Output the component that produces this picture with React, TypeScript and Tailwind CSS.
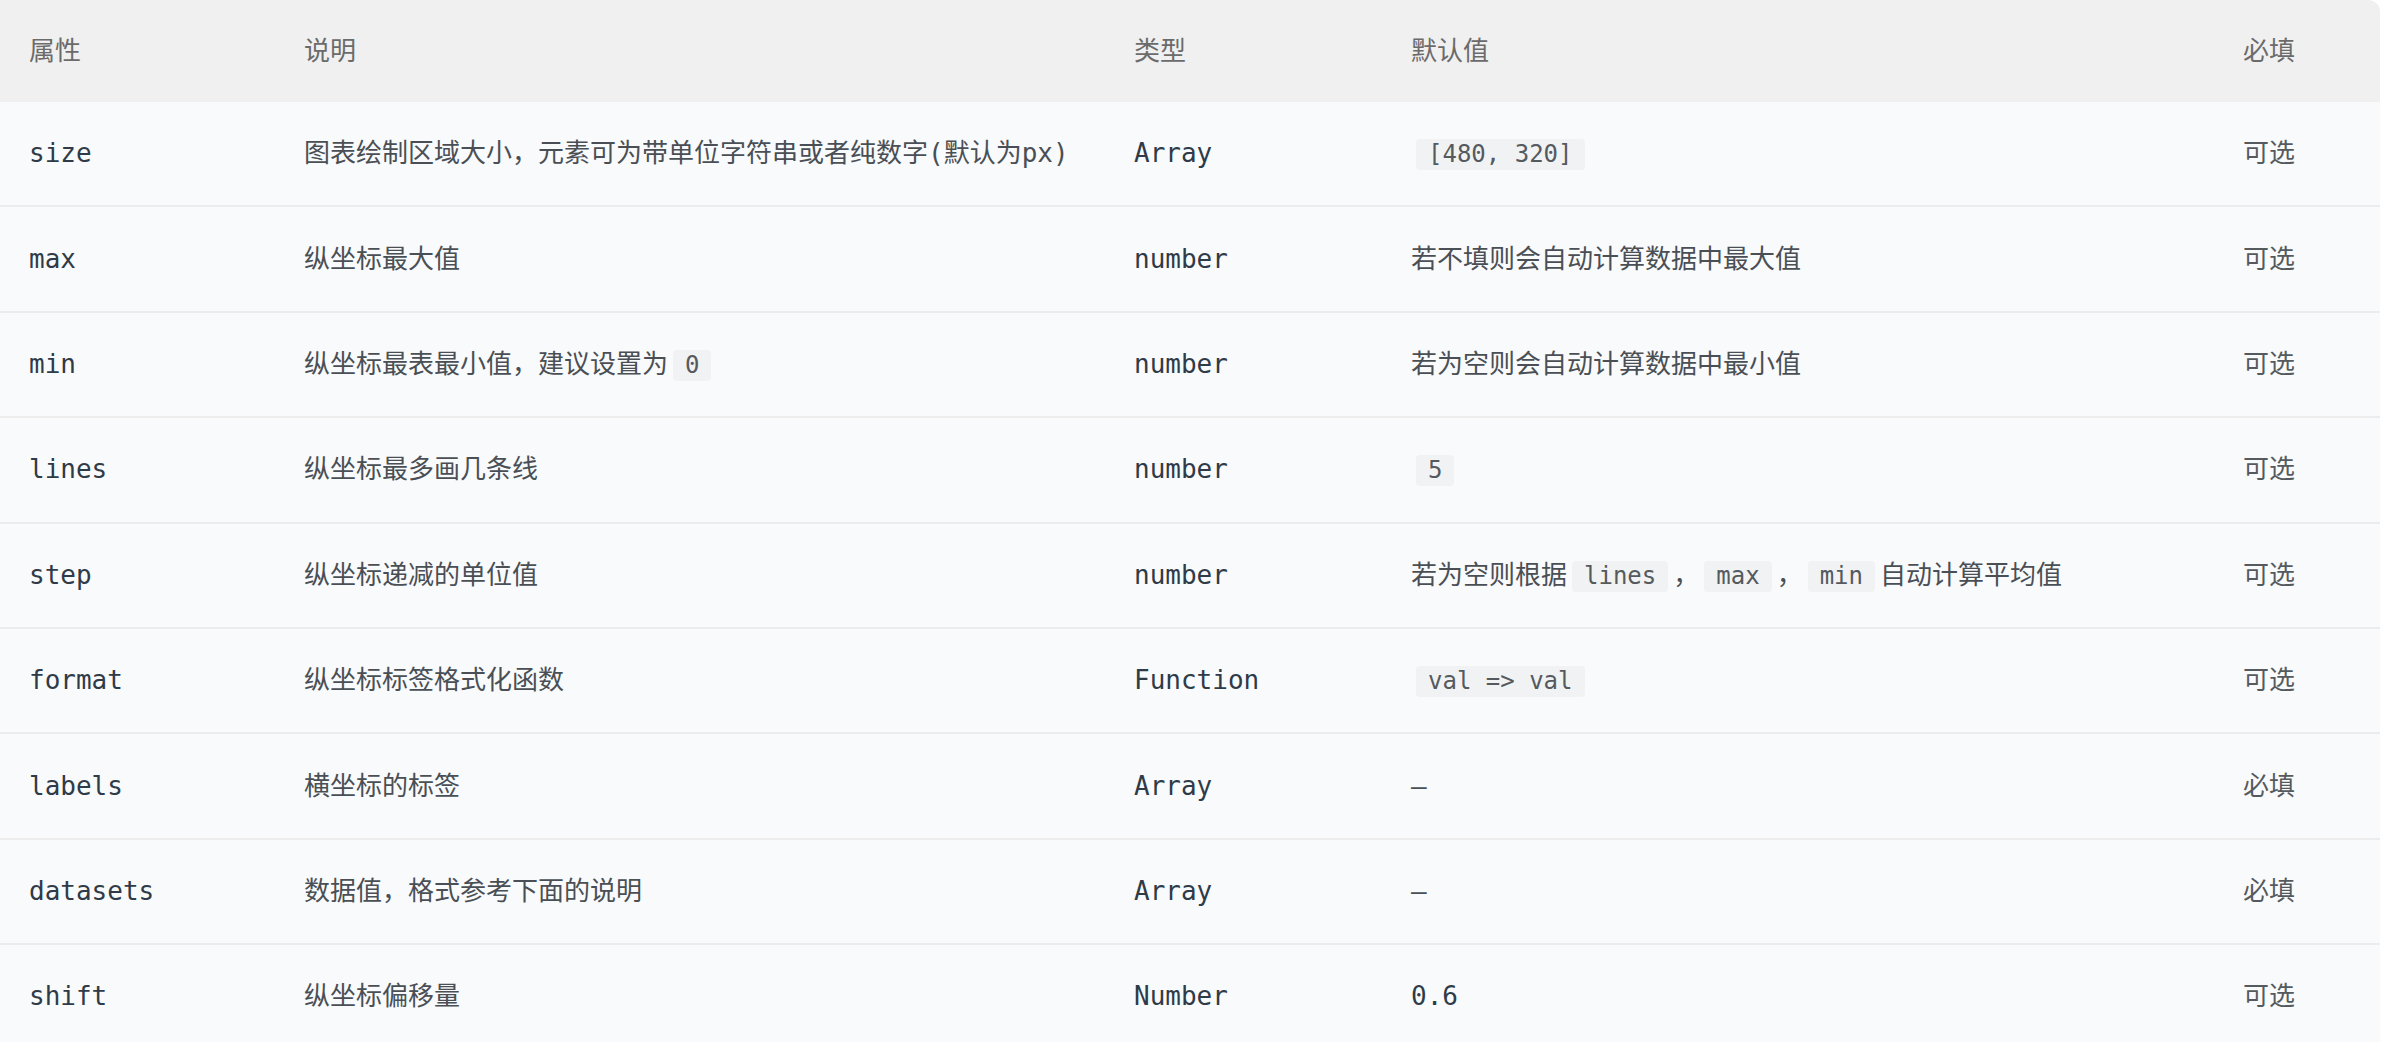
import React from "react";

const FONT = "font-['DejaVu_Sans_Mono','Noto_Sans_CJK_SC',monospace]";

function Code({ children }: { children: React.ReactNode }) {
  return (
    <span
      className={`${FONT} mx-[5px] inline-block h-[31px] rounded-[4px] bg-[#f1f2f3] px-3 align-middle text-[24px] leading-[31px] text-[#555a5f]`}
    >
      {children}
    </span>
  );
}

type Row = {
  name: string;
  desc: React.ReactNode;
  type: string;
  def: React.ReactNode;
  req: string;
};

const rows: Row[] = [
  {
    name: "size",
    desc: "图表绘制区域大小，元素可为带单位字符串或者纯数字(默认为px)",
    type: "Array",
    def: <Code>[480, 320]</Code>,
    req: "可选",
  },
  {
    name: "max",
    desc: "纵坐标最大值",
    type: "number",
    def: "若不填则会自动计算数据中最大值",
    req: "可选",
  },
  {
    name: "min",
    desc: (
      <>
        纵坐标最表最小值，建议设置为<Code>0</Code>
      </>
    ),
    type: "number",
    def: "若为空则会自动计算数据中最小值",
    req: "可选",
  },
  {
    name: "lines",
    desc: "纵坐标最多画几条线",
    type: "number",
    def: <Code>5</Code>,
    req: "可选",
  },
  {
    name: "step",
    desc: "纵坐标递减的单位值",
    type: "number",
    def: (
      <>
        若为空则根据<Code>lines</Code>，<Code>max</Code>，<Code>min</Code>自动计算平均值
      </>
    ),
    req: "可选",
  },
  {
    name: "format",
    desc: "纵坐标标签格式化函数",
    type: "Function",
    def: <Code>val =&gt; val</Code>,
    req: "可选",
  },
  {
    name: "labels",
    desc: "横坐标的标签",
    type: "Array",
    def: "–",
    req: "必填",
  },
  {
    name: "datasets",
    desc: "数据值，格式参考下面的说明",
    type: "Array",
    def: "–",
    req: "必填",
  },
  {
    name: "shift",
    desc: "纵坐标偏移量",
    type: "Number",
    def: <span className="text-[#2f3b48]">0.6</span>,
    req: "可选",
  },
];

const GRID = "grid grid-cols-[275px_830px_277px_832px_1fr]";

export default function App() {
  return (
    <div className={`min-h-screen w-full bg-white ${FONT} text-[26px]`}>
      <div className="mr-[4px] overflow-hidden rounded-r-[12px] bg-[#f9fafb]">
        <div className={`${GRID} h-[102px] items-center bg-[#f0f0f0] text-[#6b6b6b]`}>
          <div className="pl-[29px]">属性</div>
          <div className="pl-[29px]">说明</div>
          <div className="pl-[29px]">类型</div>
          <div className="pl-[29px]">默认值</div>
          <div className="pl-[29px]">必填</div>
        </div>
        {rows.map((r) => (
          <div
            key={r.name}
            className={`${GRID} h-[105.4px] items-center border-b-2 border-[#ececec]`}
          >
            <div className="pl-[29px] text-[#2f3b48]">{r.name}</div>
            <div className="whitespace-nowrap pl-[29px] text-[#4a4f55]">{r.desc}</div>
            <div className="pl-[29px] text-[#2f3b48]">{r.type}</div>
            <div className="whitespace-nowrap pl-[29px] text-[#4a4f55]">{r.def}</div>
            <div className="pl-[29px] text-[#555a5f]">{r.req}</div>
          </div>
        ))}
      </div>
    </div>
  );
}
